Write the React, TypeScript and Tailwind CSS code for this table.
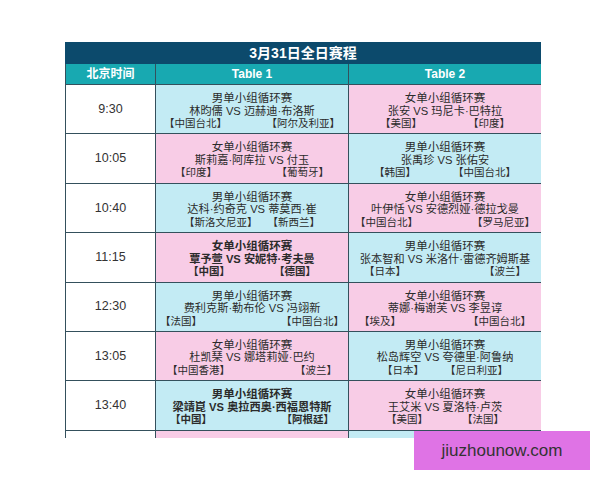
type Match = {
  ev: string;
  m: string;
  l: string;
  r: string;
  pad: string;
  bold?: boolean;
};

type Row = { time: string; a: Match; b: Match };

const rows: Row[] = [
  {
    time: "9:30",
    a: { ev: "男单小组循环赛", m: "林昀儒 VS 迈赫迪·布洛斯", l: "【中国台北】", r: "【阿尔及利亚】", pad: "px-[8px]" },
    b: { ev: "女单小组循环赛", m: "张安 VS 玛尼卡·巴特拉", l: "【美国】", r: "【印度】", pad: "px-[31px]" },
  },
  {
    time: "10:05",
    a: { ev: "女单小组循环赛", m: "斯莉嘉·阿库拉 VS 付玉", l: "【印度】", r: "【葡萄牙】", pad: "px-[19px]" },
    b: { ev: "男单小组循环赛", m: "张禹珍 VS 张佑安", l: "【韩国】", r: "【中国台北】", pad: "px-[25px]" },
  },
  {
    time: "10:40",
    a: { ev: "男单小组循环赛", m: "达科·约奇克 VS 蒂莫西·崔", l: "【斯洛文尼亚】", r: "【新西兰】", pad: "px-[28px]" },
    b: { ev: "女单小组循环赛", m: "叶伊恬 VS 安德烈娅·德拉戈曼", l: "【中国台北】", r: "【罗马尼亚】", pad: "px-[6px]" },
  },
  {
    time: "11:15",
    a: { ev: "女单小组循环赛", m: "覃予萱 VS 安妮特·考夫曼", l: "【中国】", r: "【德国】", pad: "px-[32px]", bold: true },
    b: { ev: "男单小组循环赛", m: "张本智和 VS 米洛什·雷德齐姆斯基", l: "【日本】", r: "【波兰】", pad: "px-[15px]" },
  },
  {
    time: "12:30",
    a: { ev: "男单小组循环赛", m: "费利克斯·勒布伦 VS 冯翊新", l: "【法国】", r: "【中国台北】", pad: "px-[4px]" },
    b: { ev: "女单小组循环赛", m: "蒂娜·梅谢芙 VS 李昱谆", l: "【埃及】", r: "【中国台北】", pad: "px-[10px]" },
  },
  {
    time: "13:05",
    a: { ev: "女单小组循环赛", m: "杜凯琹 VS 娜塔莉娅·巴约", l: "【中国香港】", r: "【波兰】", pad: "px-[11px]" },
    b: { ev: "男单小组循环赛", m: "松岛辉空 VS 夸德里·阿鲁纳", l: "【日本】", r: "【尼日利亚】", pad: "px-[33px]" },
  },
  {
    time: "13:40",
    a: { ev: "男单小组循环赛", m: "梁靖崑 VS 奥拉西奥·西福恩特斯", l: "【中国】", r: "【阿根廷】", pad: "px-[14px]", bold: true },
    b: { ev: "女单小组循环赛", m: "王艾米 VS 夏洛特·卢茨", l: "【美国】", r: "【法国】", pad: "px-[37px]" },
  },
];

function Cell({ x, blue }: { x: Match; blue: boolean }) {
  return (
    <div
      className={`h-[49.4px] border-r border-b border-[#34505c] pt-[7px] text-[#2b2b2b] ${blue ? "bg-[#c3ebf4]" : "bg-[#f8cce6]"} ${x.bold ? "font-bold" : ""}`}
    >
      <div className="text-center text-[11.5px] leading-[12.5px]">{x.ev}</div>
      <div className="text-center text-[11.2px] leading-[12.5px] whitespace-nowrap">{x.m}</div>
      <div className={`flex justify-between text-[10.5px] leading-[12.5px] ${x.pad}`}>
        <span>{x.l}</span>
        <span>{x.r}</span>
      </div>
    </div>
  );
}

export default function App() {
  return (
    <div
      className="relative w-[600px] h-[480px] bg-white overflow-hidden"
      style={{ fontFamily: '"Liberation Sans", "Noto Sans CJK SC", sans-serif' }}
    >
      <div className="pt-[42px] pl-[65px]">
        <div className="w-[476px] h-[396px] overflow-hidden">
          {/* Title */}
          <div className="h-[22px] bg-[#0c4a6c] text-white font-bold text-[14px] flex items-center justify-center">
            3月31日全日赛程
          </div>

          {/* Header */}
          <div className="grid grid-cols-[90px_193px_193px] h-[21px] bg-[#18a9b1] text-white font-bold text-[12px] border-l border-b border-[#34505c]">
            <div className="flex items-center justify-center border-r border-[#34505c]">北京时间</div>
            <div className="flex items-center justify-center border-r border-[#34505c]">Table 1</div>
            <div className="flex items-center justify-center border-r border-[#34505c]">Table 2</div>
          </div>

          {/* Rows */}
          {rows.map((row, i) => (
            <div key={row.time} className="grid grid-cols-[90px_193px_193px] border-l border-[#34505c]">
              <div className="h-[49.4px] flex items-center justify-center bg-white border-r border-b border-[#34505c] text-[12.5px] text-[#333]">
                {row.time}
              </div>
              <Cell x={row.a} blue={i % 2 === 0} />
              <Cell x={row.b} blue={i % 2 === 1} />
            </div>
          ))}

          {/* Partial next row */}
          <div className="grid grid-cols-[90px_193px_193px] border-l border-[#34505c] h-[40px]">
            <div className="bg-white border-r border-[#34505c]" />
            <div className="bg-[#f8cce6] border-r border-[#34505c]" />
            <div className="bg-[#c3ebf4] border-r border-[#34505c]" />
          </div>
        </div>
      </div>

      {/* Watermark */}
      <div className="absolute left-[414px] top-[431px] w-[176px] h-[39px] bg-[#df73e5] flex items-center justify-center text-[17px] text-[#333]">
        jiuzhounow.com
      </div>
    </div>
  );
}
